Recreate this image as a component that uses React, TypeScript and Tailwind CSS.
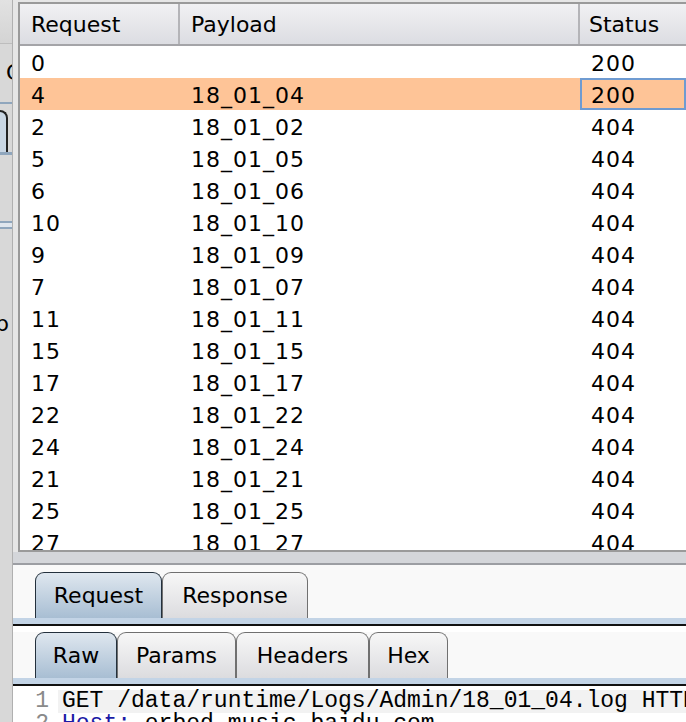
import React from "react";

const rows: [string, string, string][] = [
  ["0", "", "200"],
  ["4", "18_01_04", "200"],
  ["2", "18_01_02", "404"],
  ["5", "18_01_05", "404"],
  ["6", "18_01_06", "404"],
  ["10", "18_01_10", "404"],
  ["9", "18_01_09", "404"],
  ["7", "18_01_07", "404"],
  ["11", "18_01_11", "404"],
  ["15", "18_01_15", "404"],
  ["17", "18_01_17", "404"],
  ["22", "18_01_22", "404"],
  ["24", "18_01_24", "404"],
  ["21", "18_01_21", "404"],
  ["25", "18_01_25", "404"],
  ["27", "18_01_27", "404"],
];

const Tab = ({ label, active, w }: { label: string; active?: boolean; w: string }) => (
  <div
    className={`${w} h-full flex items-center justify-center rounded-t-[9px] border border-b-0 text-[22px] ${
      active
        ? "bg-gradient-to-b from-[#dfe7ef] to-[#a8bed3] border-[#23303c]"
        : "bg-gradient-to-b from-[#f7f7f7] to-[#dcdcdf] border-[#707070]"
    }`}
  >
    {label}
  </div>
);

const TabBar = ({ tabs }: { tabs: { label: string; w: string; active?: boolean }[] }) => (
  <div className="flex flex-col">
    <div className="flex h-[46px] pl-[22px]">
      {tabs.map((t) => (
        <Tab key={t.label} {...t} />
      ))}
    </div>
    <div className="h-[6px] bg-[#c3d4e6]" />
    <div className="h-[2px] bg-[#111]" />
  </div>
);

export default function App() {
  return (
    <div
      className="w-[686px] h-[722px] overflow-hidden flex bg-[#f9f9f9] text-black"
      style={{ fontFamily: '"DejaVu Sans", sans-serif' }}
    >
      {/* background window fragments */}
      <div className="w-[13px] shrink-0 flex flex-col bg-[#d8d8d8] border-r border-[#b0b0b0] overflow-hidden">
        <div className="h-[44px] bg-gradient-to-b from-[#e2e2e2] to-[#d4d4d4] border-b border-[#bdbdbd]" />
        <div className="h-[58px] flex items-center">
          <span className="text-[22px] ml-[6px] leading-none">C</span>
        </div>
        <div className="h-[2px] bg-[#8fa6bd]" />
        <div className="h-[48px] flex">
          <div className="w-[8px] border-r-2 border-t-2 border-[#222] rounded-tr-[8px] mt-[6px] bg-[#c9d6e3]" />
        </div>
        <div className="h-[3px] bg-[#8fa6bd]" />
        <div className="h-[66px]" />
        <div className="h-[2px] bg-[#8fa6bd]" />
        <div className="h-[4px] bg-[#dfe6ee]" />
        <div className="h-[2px] bg-[#8fa6bd]" />
        <div className="h-[84px]" />
        <span className="text-[22px] -ml-[5px] leading-none">p</span>
      </div>

      <div className="flex-1 flex flex-col min-w-0">
        {/* results table */}
        <div className="h-[552px] shrink-0 bg-[#e6e6e6] pl-[5px] pt-[2px]">
          <div className="h-[550px] border-l-2 border-t-2 border-b-2 border-[#9a9a9a] bg-white overflow-hidden">
            <div className="flex h-[42px] bg-gradient-to-b from-[#f1f1f3] to-[#dcdde2] border-b-2 border-[#a4a4a8] text-[22px]">
              <div className="w-[160px] pl-[11px] flex items-center border-r-2 border-[#b4b4b8]">Request</div>
              <div className="w-[400px] pl-[11px] flex items-center border-r-2 border-[#b4b4b8]">Payload</div>
              <div className="flex-1 pl-[9px] flex items-center">Status</div>
            </div>
            {rows.map(([r, p, s]) => {
              const sel = r === "4";
              return (
                <div
                  key={r}
                  className={`flex h-[32px] pt-[2px] text-[22px] tracking-[1px] ${sel ? "bg-[#fec497]" : ""}`}
                >
                  <div className="w-[160px] pl-[11px] flex items-center">{r}</div>
                  <div className="w-[400px] pl-[11px] flex items-center">{p}</div>
                  <div
                    className={`flex-1 flex items-center -mt-[2px] ${
                      sel ? "border-2 border-[#6f9bd1] pl-[9px] pt-[2px]" : "pl-[11px] pt-[2px]"
                    }`}
                  >
                    {s}
                  </div>
                </div>
              );
            })}
          </div>
        </div>

        {/* splitter */}
        <div className="h-[13px] shrink-0 bg-[#d4d6da] border-b-2 border-[#9c9ea3]" />

        {/* lower panel */}
        <div className="flex-1 flex flex-col pt-[7px] bg-[#f9f9f9]">
          <TabBar
            tabs={[
              { label: "Request", w: "w-[127px]", active: true },
              { label: "Response", w: "w-[146px]" },
            ]}
          />
          <div className="h-[6px] bg-white" />
          <TabBar
            tabs={[
              { label: "Raw", w: "w-[82px]", active: true },
              { label: "Params", w: "w-[119px]" },
              { label: "Headers", w: "w-[133px]" },
              { label: "Hex", w: "w-[79px]" },
            ]}
          />
          <div
            className="flex-1 bg-white pt-[4px] text-[23px] leading-[23px] whitespace-nowrap"
            style={{ fontFamily: '"Liberation Mono", monospace' }}
          >
            <div className="flex">
              <span className="w-[45px] shrink-0 text-right pr-[9px] text-[#8a8a8a]">1</span>
              <span className="flex-1 bg-[#f2f2f2] pl-[4px]">GET /data/runtime/Logs/Admin/18_01_04.log HTTP/1.1</span>
            </div>
            <div className="flex">
              <span className="w-[45px] shrink-0 text-right pr-[9px] text-[#8a8a8a]">2</span>
              <span className="flex-1 pl-[4px]">
                <span className="text-[#1a1aa6]">Host:</span> erbed.music.baidu.com
              </span>
            </div>
          </div>
        </div>
      </div>
    </div>
  );
}
